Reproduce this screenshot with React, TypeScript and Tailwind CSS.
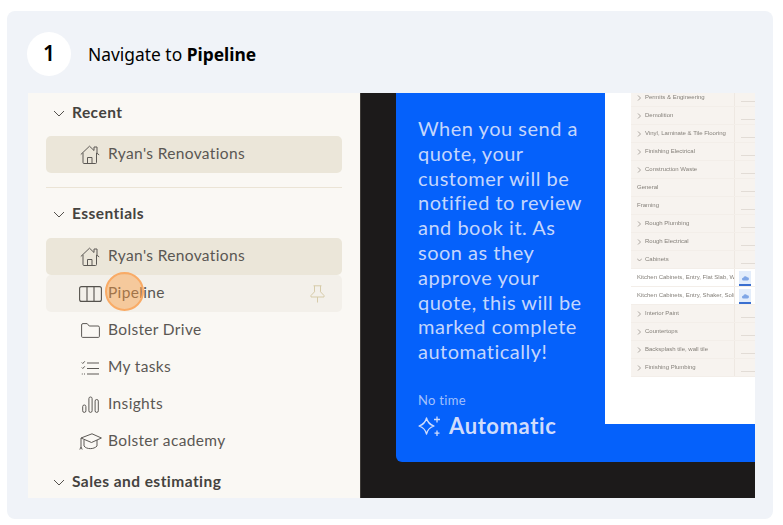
const sidebarFont = "font-['Lato',sans-serif]";

const tableRows = [
  { label: "Permits & Engineering", arrow: true },
  { label: "Demolition", arrow: true },
  { label: "Vinyl, Laminate & Tile Flooring", arrow: true },
  { label: "Finishing Electrical", arrow: true },
  { label: "Construction Waste", arrow: true },
  { label: "General" },
  { label: "Framing" },
  { label: "Rough Plumbing", arrow: true },
  { label: "Rough Electrical", arrow: true },
  { label: "Cabinets", open: true },
  { label: "Kitchen Cabinets, Entry, Flat Slab, W", white: true },
  { label: "Kitchen Cabinets, Entry, Shaker, Soli", white: true },
  { label: "Interior Paint", arrow: true },
  { label: "Countertops", arrow: true },
  { label: "Backsplash tile, wall tile", arrow: true },
  { label: "Finishing Plumbing", arrow: true },
];

function Chevron() {
  return (
    <svg width="12" height="12" viewBox="0 0 12 12" fill="none" stroke="#55524d" strokeWidth="1" className="shrink-0">
      <path d="M1 4l5 5 5-5" />
    </svg>
  );
}

function HomeIcon() {
  return (
    <svg width="20" height="19" viewBox="0 0 20 19" fill="none" stroke="#5c5955" strokeWidth="1" strokeLinejoin="round">
      <path d="M0.8 9.5L9.5 1.2l4.5 4.3V2h3v6.3l2.2 1.6" />
      <path d="M3 7.8v9.7a1 1 0 0 0 1 1h11.500a1 1 0 0 0 1-1V7.8" />
      <path d="M7.5 18.5v-6H12v6" />
    </svg>
  );
}

function BoardIcon() {
  return (
    <svg width="23" height="16" viewBox="0 0 23 16" fill="none" stroke="#55524d" strokeWidth="1.1">
      <rect x="0.6" y="0.6" width="21.8" height="14.8" rx="2" />
      <path d="M8 1v14M15 1v14" />
    </svg>
  );
}

function FolderIcon() {
  return (
    <svg width="19" height="15" viewBox="0 0 19 15" fill="none" stroke="#5c5955" strokeWidth="1">
      <path d="M0.6 2A1.4 1.4 0 0 1 2 0.6h4.2l2 2.4H17a1.4 1.4 0 0 1 1.400 1.400v9a1 1 0 0 1-1 1H1.600a1 1 0 0 1-1-1z" />
    </svg>
  );
}

function TasksIcon() {
  return (
    <svg width="18" height="14" viewBox="0 0 18 14" fill="none" stroke="#5c5955" strokeWidth="1">
      <path d="M0.8 1.5l1 1 2-2.200M0.8 6.5l1 1 2-2.200" />
      <path d="M6 2h12M6 7.5h12M6 13h12" />
      <path d="M0.8 13h1M3 13h1" />
    </svg>
  );
}

function BarsIcon() {
  return (
    <svg width="17" height="17" viewBox="0 0 17 17" fill="none" stroke="#5c5955" strokeWidth="1">
      <rect x="0.7" y="9" width="3.2" height="7.4" rx="1.6" />
      <rect x="6.9" y="1" width="3.2" height="15.4" rx="1.6" />
      <rect x="13.1" y="3.5" width="3.2" height="12.9" rx="1.6" />
    </svg>
  );
}

function CapIcon() {
  return (
    <svg width="23" height="17" viewBox="0 0 23 17" fill="none" stroke="#5c5955" strokeWidth="1" strokeLinejoin="round">
      <path d="M2 5L13 0.8 22.4 5 12.500 9.500z" />
      <path d="M5 7v6c2.500 3.500 10 3.500 13 0V7" />
      <path d="M2 5v9M0.800 16.500l1.200-2.500 1.200 2.500" />
    </svg>
  );
}

function PinIcon() {
  return (
    <svg width="15" height="18" viewBox="0 0 15 18" fill="none" stroke="#d6cba9" strokeWidth="1" strokeLinejoin="round" className="ml-auto mr-[17px]">
      <path d="M3.5 0.8h8M4.5 0.8v6L1 10.5V12h13v-1.500L10.500 6.800v-6M7.500 12v5.500" />
    </svg>
  );
}

function Sparkles() {
  return (
    <svg width="24" height="22" viewBox="0 0 24 22" fill="none" stroke="#d0dcfb" strokeWidth="1.3" strokeLinejoin="round" className="shrink-0">
      <path d="M8.5 3c1 4.500 3 6.500 7.500 8-4.500 1.500-6.500 3.500-7.500 8-1-4.500-3-6.500-7.500-8 4.500-1.500 6.500-3.500 7.500-8z" />
      <path d="M19 1.500v6M16 4.500h6M19 15.500v5.500M16.500 18.200h5" />
    </svg>
  );
}

function NavRow({
  icon,
  label,
  bg = "",
  pin = false,
}: {
  icon: React.ReactNode;
  label: string;
  bg?: string;
  pin?: boolean;
}) {
  return (
    <div className={`h-[37px] rounded-[5px] flex items-center ${bg}`}>
      <div className="w-[62px] pl-[32px] pr-[6px] flex justify-center shrink-0">{icon}</div>
      <span className="-mt-[1px] text-[15.5px] text-[#5a5753] tracking-[0.35px]">{label}</span>
      {pin && <PinIcon />}
    </div>
  );
}

function SectionTitle({ label }: { label: string }) {
  return (
    <div className="h-[24px] flex items-center gap-[7px] pl-[7px]">
      <Chevron />
      <span className="text-[15.5px] font-bold text-[#45433f] tracking-[0.45px]">{label}</span>
    </div>
  );
}

function TableArrow({ open }: { open?: boolean }) {
  return (
    <svg width="5" height="6" viewBox="0 0 5 6" fill="none" stroke="#8b8580" strokeWidth="0.7" className="shrink-0">
      {open ? <path d="M0 1.500l2.500 2.500L5 1.500" /> : <path d="M1 0.500l2.500 2.500L1 5.500" />}
    </svg>
  );
}

export default function App() {
  return (
    <div className="w-[783px] h-[525px] bg-white pt-[11px] px-[7px] overflow-hidden">
      <div className="w-[766px] h-[508px] bg-[#f0f3f8] rounded-[8px] pt-[21px] pl-[20px]">
        {/* step header */}
        <div className="flex items-center h-[44px] font-['Noto_Sans',sans-serif]">
          <div className="w-[44px] h-[44px] rounded-full bg-white flex items-center justify-center text-[21px] font-semibold text-black">
            1
          </div>
          <div className="ml-[17px] text-[17.4px] text-black">
            Navigate to <b>Pipeline</b>
          </div>
        </div>

        {/* screenshot */}
        <div className="mt-[17px] ml-[1px] w-[727px] h-[405px] flex overflow-hidden">
          <div className={`relative w-[332px] h-full bg-[#faf8f4] px-[18px] shrink-0 overflow-hidden ${sidebarFont}`}>
            <div className="pt-[8px]">
              <SectionTitle label="Recent" />
            </div>
            <div className="mt-[11px]">
              <NavRow icon={<HomeIcon />} label="Ryan's Renovations" bg="bg-[#ebe6d9]" />
            </div>
            <div className="mt-[14px] h-[1px] bg-[#ebe4d6]" />
            <div className="mt-[14px]">
              <SectionTitle label="Essentials" />
            </div>
            <div className="mt-[12px]">
              <NavRow icon={<HomeIcon />} label="Ryan's Renovations" bg="bg-[#ebe6d9]" />
              <NavRow icon={<BoardIcon />} label="Pipeline" bg="bg-[#f3f0ea]" pin />
              <NavRow icon={<FolderIcon />} label="Bolster Drive" />
              <NavRow icon={<TasksIcon />} label="My tasks" />
              <NavRow icon={<BarsIcon />} label="Insights" />
              <NavRow icon={<CapIcon />} label="Bolster academy" />
            </div>
            <div className="mt-[10px]">
              <SectionTitle label="Sales and estimating" />
            </div>
            {/* click marker */}
            <div className="absolute left-[77px] top-[179px] w-[39px] h-[39px] rounded-full bg-[#f89a3e]/45 border-2 border-[#f9ab66]" />
          </div>

          <div className="flex-1 h-full bg-[#1c1a1a] pl-[35px] border-l border-[#55524d]/60">
            <div className="h-[369px] bg-[#0561fb] rounded-bl-[6px] flex font-['Lato',sans-serif]">
              <div className="w-[209px] pl-[22px] pr-[14px] shrink-0">
                <p className="pt-[23px] text-[20px] leading-[24.8px] text-[#c4d6fd] tracking-[0.5px]">
                  When you send a quote, your customer will be notified to review and book it. As soon as they approve your quote, this will be marked complete automatically!
                </p>
                <div className="mt-[27px] text-[13px] text-[#a3c0fc] tracking-[0.3px]">No time</div>
                <div className="-mt-[1px] flex items-center gap-[7px]">
                  <Sparkles />
                  <span className="text-[22px] font-bold text-[#d0dcfb] tracking-[0.6px]">Automatic</span>
                </div>
              </div>
              <div className="flex-1 h-[331px] bg-white pl-[26px] overflow-hidden">
                <div className="-mt-[4px] bg-[#f7f3ef] blur-[0.5px]">
                  {tableRows.map((row) => (
                    <div
                      key={row.label}
                      className={`h-[18px] flex items-center border-b border-[#f3eee9] text-[6px] text-[#85807a] font-['Liberation_Sans',sans-serif] ${
                        row.white ? "bg-white" : ""
                      }`}
                    >
                      <div className="w-[104px] shrink-0 pl-[6px] flex items-center gap-[3px] overflow-hidden whitespace-nowrap border-r border-[#eee8e2] h-full">
                        {(row.arrow || row.open) && <TableArrow open={row.open} />}
                        <span>{row.label}</span>
                      </div>
                      <div className="flex-1 h-full flex items-end">
                        {row.white ? (
                          <div className="ml-[4px] w-[12px] h-[15px] bg-[#e3edfb] border-b-2 border-[#3a6fd0] flex items-center justify-center">
                            <svg width="7" height="6" viewBox="0 0 7 6" fill="#7fa6e6">
                              <path d="M1.5 5.5a1.4 1.4 0 0 1-.2-2.8A2 2 0 0 1 5 2.2a1.6 1.6 0 0 1 .5 3.3z" />
                            </svg>
                          </div>
                        ) : (
                          <div className="ml-[6px] w-[14px] h-[1px] bg-[#e2dcd6] mb-[4px]" />
                        )}
                      </div>
                    </div>
                  ))}
                </div>
              </div>
            </div>
          </div>
        </div>
      </div>
    </div>
  );
}
